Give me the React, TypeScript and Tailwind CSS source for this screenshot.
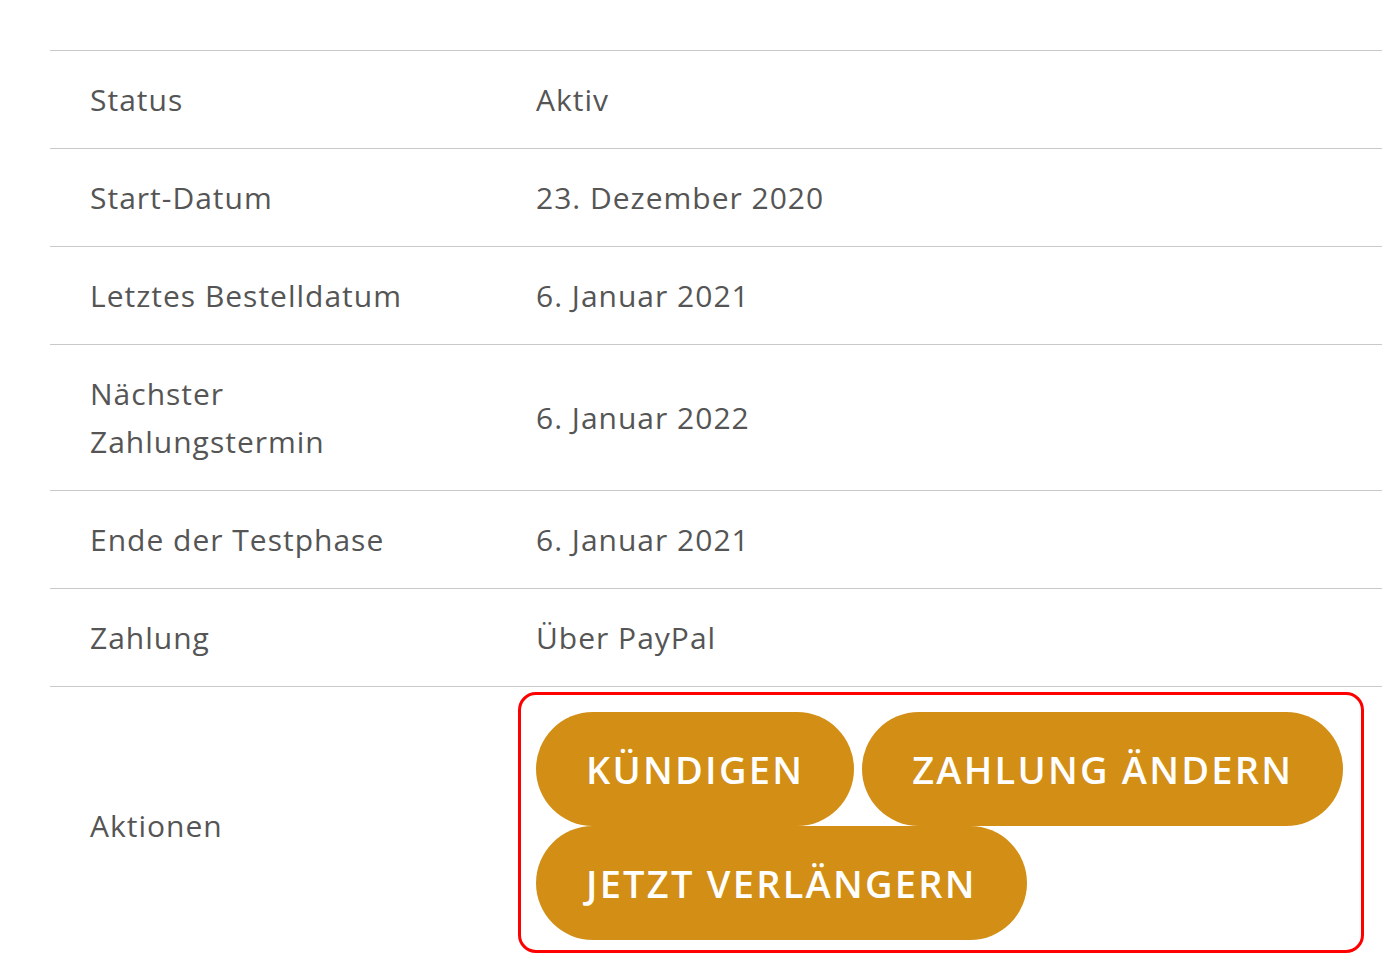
const rows: { label: string[]; value: string; tall?: boolean }[] = [
  { label: ['Status'], value: 'Aktiv' },
  { label: ['Start-Datum'], value: '23. Dezember 2020' },
  { label: ['Letztes Bestelldatum'], value: '6. Januar 2021' },
  { label: ['Nächster', 'Zahlungstermin'], value: '6. Januar 2022', tall: true },
  { label: ['Ende der Testphase'], value: '6. Januar 2021' },
  { label: ['Zahlung'], value: 'Über PayPal' },
];

function ActionButton({ children }: { children: string }) {
  return (
    <button className="h-[114px] px-[50px] rounded-full bg-[#d28e15] text-white text-[38px] font-semibold tracking-[2.25px] uppercase whitespace-nowrap">
      {children}
    </button>
  );
}

export default function App() {
  return (
    <div
      className="min-h-screen bg-white pt-[50px] pl-[50px] overflow-hidden"
      style={{ fontFamily: '"Open Sans", sans-serif' }}
    >
      <div className="w-[1400px] border-t border-[#cbc8c8] text-[30px] tracking-[1px] text-[#555] leading-[48px]">
        {rows.map((row) => (
          <div
            key={row.value + row.label[0]}
            className={`flex items-center border-b border-[#cbc8c8] ${row.tall ? 'h-[146px]' : 'h-[98px]'}`}
          >
            <div className="w-[486px] pl-10">
              {row.label.map((l) => (
                <div key={l}>{l}</div>
              ))}
            </div>
            <div>{row.value}</div>
          </div>
        ))}

        {/* Actions */}
        <div className="flex items-center h-[280px]">
          <div className="w-[468px] pl-10 mb-[2px]">Aktionen</div>
          <div className="self-start mt-[5px] w-[846px] h-[261px] border-[3px] border-[#f00] rounded-[18px] pl-[15px] pt-[17px]">
            <div className="flex flex-wrap gap-x-2">
              <ActionButton>Kündigen</ActionButton>
              <ActionButton>Zahlung ändern</ActionButton>
              <ActionButton>Jetzt verlängern</ActionButton>
            </div>
          </div>
        </div>
      </div>
    </div>
  );
}
